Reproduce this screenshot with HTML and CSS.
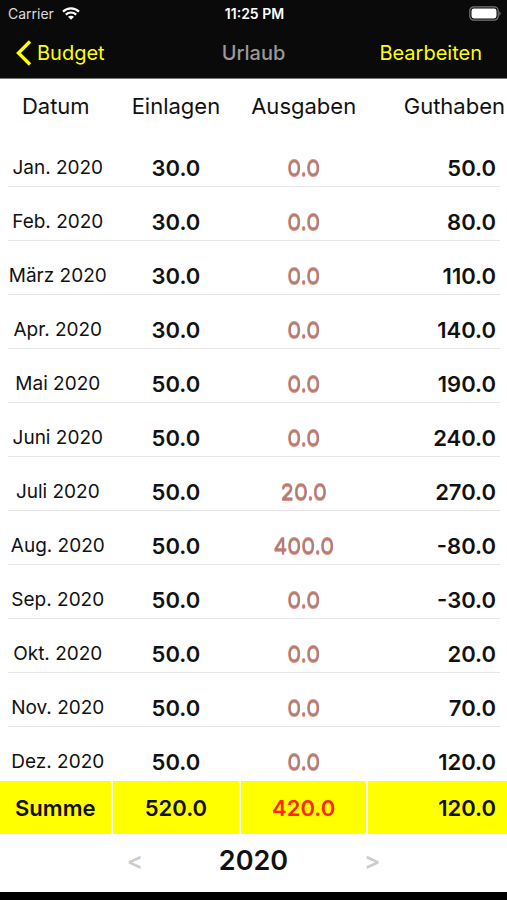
FILE: index.html
```html
<!DOCTYPE html>
<html lang="de">
<head>
  <meta charset="UTF-8" />
  <meta name="viewport" content="width=device-width, initial-scale=1" />
  <title>Urlaub - Budget</title>
  <link rel="stylesheet" href="styles.css">
</head>
<body>
  <header class="top">
    <div class="status-bar">
      <div class="carrier">
        <span>Carrier</span>
        <svg class="wifi" viewBox="0 0 18 13" width="18" height="13" aria-hidden="true">
          <path d="M1 4.6C5.5.3 12.5.3 17 4.6" fill="none" stroke="#fff" stroke-width="2.2"/>
          <path d="M3.8 7.6c3-2.8 7.4-2.8 10.4 0" fill="none" stroke="#fff" stroke-width="2.2"/>
          <path d="M6 9.8c1.8-1.5 4.2-1.5 6 0l-3 3z" fill="#fff"/>
        </svg>
      </div>
      <span class="time">11:25 PM</span>
      <svg class="battery" viewBox="0 0 32 15" width="32" height="15" aria-hidden="true">
        <rect x=".8" y=".8" width="28.4" height="13.4" rx="4" fill="none" stroke="#777" stroke-width="1.2"/>
        <rect x="2.5" y="2.5" width="25" height="10" rx="2.4" fill="#fff"/>
        <path d="M30.4 5.2c1.6.7 1.6 3.9 0 4.6z" fill="#777"/>
      </svg>
    </div>
    <nav class="nav-bar">
      <a class="back" href="#budget">
        <svg viewBox="0 0 16 26" width="16" height="26" aria-hidden="true">
          <path d="M14 1.5 2.5 13 14 24.5" fill="none" stroke="#ff0" stroke-width="3.4"/>
        </svg>
        Budget
      </a>
      <h1>Urlaub</h1>
      <button class="edit" type="button">Bearbeiten</button>
    </nav>
  </header>

  <main>
    <table class="budget">
      <colgroup>
        <col class="col-date"><col class="col-in"><col class="col-out"><col class="col-balance">
      </colgroup>
      <thead>
        <tr><th>Datum</th><th>Einlagen</th><th>Ausgaben</th><th>Guthaben</th></tr>
      </thead>
      <tbody>
        <tr><td>Jan. 2020</td><td>30.0</td><td>0.0</td><td>50.0</td></tr>
        <tr><td>Feb. 2020</td><td>30.0</td><td>0.0</td><td>80.0</td></tr>
        <tr><td>März 2020</td><td>30.0</td><td>0.0</td><td>110.0</td></tr>
        <tr><td>Apr. 2020</td><td>30.0</td><td>0.0</td><td>140.0</td></tr>
        <tr><td>Mai 2020</td><td>50.0</td><td>0.0</td><td>190.0</td></tr>
        <tr><td>Juni 2020</td><td>50.0</td><td>0.0</td><td>240.0</td></tr>
        <tr><td>Juli 2020</td><td>50.0</td><td>20.0</td><td>270.0</td></tr>
        <tr><td>Aug. 2020</td><td>50.0</td><td>400.0</td><td>-80.0</td></tr>
        <tr><td>Sep. 2020</td><td>50.0</td><td>0.0</td><td>-30.0</td></tr>
        <tr><td>Okt. 2020</td><td>50.0</td><td>0.0</td><td>20.0</td></tr>
        <tr><td>Nov. 2020</td><td>50.0</td><td>0.0</td><td>70.0</td></tr>
        <tr><td>Dez. 2020</td><td>50.0</td><td>0.0</td><td>120.0</td></tr>
      </tbody>
      <tfoot>
        <tr><th>Summe</th><td>520.0</td><td>420.0</td><td>120.0</td></tr>
      </tfoot>
    </table>
  </main>

  <footer class="year-bar">
    <button type="button" aria-label="Vorheriges Jahr">&lt;</button>
    <span class="year">2020</span>
    <button type="button" aria-label="Nächstes Jahr">&gt;</button>
  </footer>
</body>
</html>
```
FILE: styles.css
```css
* {
  box-sizing: border-box;
}
body {
  margin: 0;
  min-height: 100vh;
  display: flex;
  flex-direction: column;
  background: #fff;
  color: #111;
  font-family: Inter, "Liberation Sans", sans-serif;
}
button {
  border: none;
  background: none;
  padding: 0;
  font: inherit;
  cursor: pointer;
}

/* Status bar and navigation */
.top {
  background: #0a0a0a;
  border-bottom: 1px solid #777;
  color: #fff;
}
.status-bar {
  display: grid;
  grid-template-columns: 1fr auto 1fr;
  align-items: center;
  height: 27px;
  padding: 0 6px 0 8px;
  font-size: 14px;
}
.carrier {
  display: flex;
  align-items: center;
  gap: 8px;
  color: #ddd;
}
.time {
  font-weight: 600;
}
.battery {
  justify-self: end;
}
.nav-bar {
  display: grid;
  grid-template-columns: 1fr auto 1fr;
  align-items: center;
  height: 51px;
  padding: 0 16px;
  font-size: 20px;
}
.nav-bar h1 {
  margin: 0;
  font-size: 20px;
  font-weight: 500;
  color: #999;
}
.back {
  display: flex;
  align-items: center;
  gap: 5px;
  color: #ff0;
  text-decoration: none;
}
.edit {
  justify-self: end;
  padding-right: 9px;
  color: #ff0;
}

/* Month table */
.budget {
  width: 100%;
  table-layout: fixed;
  border-collapse: collapse;
  text-align: center;
}
.col-date {
  width: 22%;
}
.col-in {
  width: 25.4%;
}
.col-out {
  width: 25%;
}
.col-balance {
  width: 27.6%;
}
.budget th,
.budget td {
  height: 54px;
  padding: 0;
  font-size: 22px;
  font-weight: 600;
  line-height: 26px;
  white-space: nowrap;
}
.budget thead th {
  font-weight: 400;
}
.budget thead th:last-child {
  text-align: right;
  padding-right: 2px;
}
.budget tbody tr {
  background: linear-gradient(#e6e6e6, #e6e6e6) 8px 100% / calc(100% - 15px) 1px no-repeat;
}
.budget tbody tr:last-child {
  background: none;
}
.budget tbody td {
  padding-top: 16px;
}
.budget tbody td:first-child {
  padding-left: 4px;
  font-size: 19px;
  font-weight: 400;
}
.budget tbody td:nth-child(3) {
  font-weight: 400;
  color: #a8807a;
  text-shadow: 0 1px 0 rgba(216, 70, 48, 0.6), 0 -1px 0 rgba(216, 70, 48, 0.6);
}
.budget td:last-child {
  padding-right: 11px;
  text-align: right;
}
.budget tfoot th,
.budget tfoot td {
  height: 53px;
  background: #ff0;
  border-right: 2px solid #fff;
}
.budget tfoot td:last-child {
  border-right: none;
}
.budget tfoot td:nth-child(3) {
  color: #ff2600;
}

/* Year switch */
.year-bar {
  flex: 1;
  display: flex;
  justify-content: center;
  align-items: center;
  gap: 76px;
  padding-bottom: 5px;
  border-bottom: 8px solid #000;
}
.year-bar button {
  color: #ccc;
  font-size: 24px;
  font-weight: 600;
}
.year {
  font-size: 27px;
  font-weight: 600;
}
```
